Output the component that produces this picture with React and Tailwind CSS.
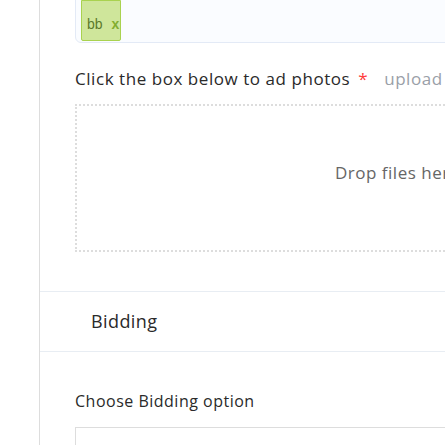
import React from 'react';

const App = () => {
  return (
    <div className="w-[445px] h-[445px] overflow-hidden bg-white" style={{ fontFamily: '"Open Sans", "Noto Sans", sans-serif' }}>
      <div className="flex h-full">
        <div className="w-[39px] shrink-0" />
        <div className="w-[800px] shrink-0 border-l border-[#dddddd] h-full">
          {/* photos section */}
          <div className="px-[35px] pb-[39px]">
            <div className="-mt-[8px] h-[51px] w-[730px] rounded-b-[6px] border border-[#e3eaf6] bg-[#fafcff] pl-[5px] pt-[7px]">
              <div className="flex h-[41px] w-[40px] items-center gap-[9px] rounded-b-[2px] border border-[#a9d24f] bg-[#cfe69b] pl-[5px] pt-[6px] text-[14px] leading-[16px]" style={{ fontFamily: '"Liberation Sans", Arial, sans-serif' }}>
                <span className="text-[#5c7a2c]">bb</span>
                <span className="font-bold text-[#82ad2f]">x</span>
              </div>
            </div>
            <div className="mt-[24px] flex items-center text-[17px] leading-[24px] tracking-[0.55px] text-[#2a2a2a]">
              <span>Click the box below to ad photos</span>
              <span className="ml-[8px] text-[#ff3b3b]">*</span>
              <span className="ml-[16px] text-[#9aa0a8]">upload cover photo first</span>
            </div>
            <div className="mt-[13px] w-[730px] border-2 border-dotted border-[#dddddd] pt-[55px] pb-[65px] text-center text-[17px] leading-[24px] tracking-[0.5px] text-[#666666]">
              Drop files here to upload
            </div>
          </div>
          {/* bidding header */}
          <div className="flex h-[61px] items-center border-y border-[#e8edf3] pl-[51px] text-[18px] tracking-[0.4px] text-[#2a2a2a]">
            Bidding
          </div>
          {/* bidding option */}
          <div className="px-[35px] pt-[37px]">
            <div className="text-[16px] leading-[24px] tracking-[0.5px] text-[#2a2a2a]">Choose Bidding option</div>
            <div className="mt-[14px] h-[40px] w-[730px] border border-[#dddddd]" />
          </div>
        </div>
      </div>
    </div>
  );
};

export default App;
